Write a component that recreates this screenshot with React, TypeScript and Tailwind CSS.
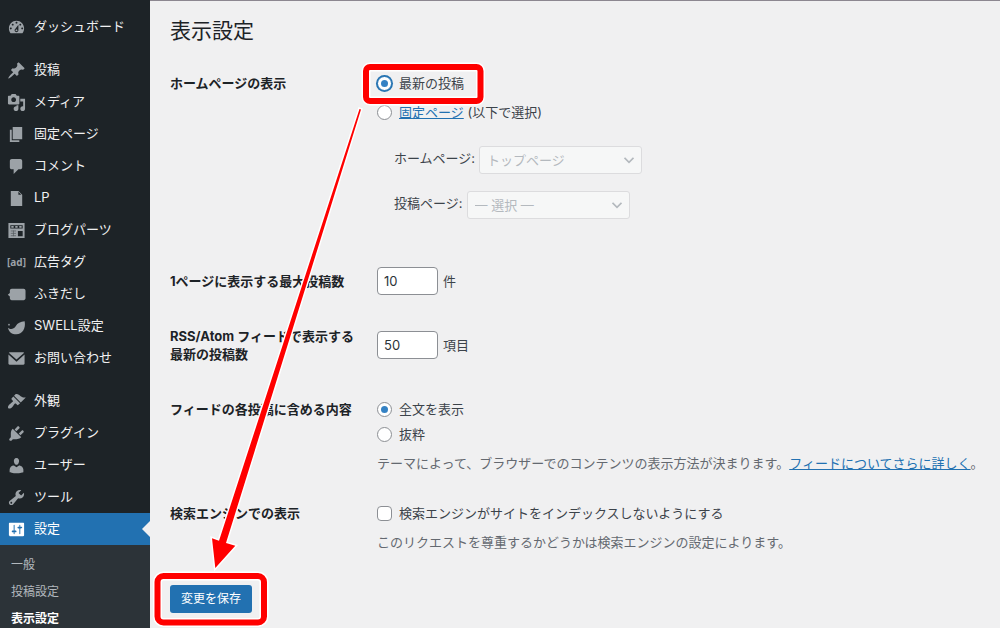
import React from 'react';

interface IconProps {
  d?: string,
  viewBox?: string,
  children?: React.ReactNode,
}

const Icon = ({ d, viewBox = '0 0 20 20', children }: IconProps) => (
  <svg className="size-[19px]" viewBox={viewBox} fill="currentColor" fillRule="evenodd" aria-hidden="true">
    {d ? <path d={d}/> : children}
  </svg>
);

const icons = {
  dashboard: 'M3.76 16h12.48c1.1-1.37 1.76-3.11 1.76-5 0-4.42-3.58-8-8-8s-8 3.58-8 8c0 1.89.66 3.63 1.76 5zM10 4c.55 0 1 .45 1 1s-.45 1-1 1-1-.45-1-1 .45-1 1-1zM6 6c.55 0 1 .45 1 1s-.45 1-1 1-1-.45-1-1 .45-1 1-1zm8 0c.55 0 1 .45 1 1s-.45 1-1 1-1-.45-1-1 .45-1 1-1zm-5.37 5.55L12 7v6c0 1.1-.9 2-2 2s-2-.9-2-2c0-.57.24-1.08.63-1.45zM4 10c.55 0 1 .45 1 1s-.45 1-1 1-1-.45-1-1 .45-1 1-1zm12 0c.55 0 1 .45 1 1s-.45 1-1 1-1-.45-1-1 .45-1 1-1zm-5 3c0-.55-.45-1-1-1s-1 .45-1 1 .45 1 1 1 1-.45 1-1z',
  post: 'M10.44 3.02l1.82-1.82 6.36 6.35-1.83 1.82c-1.05-.68-2.48-.57-3.41.36l-.75.75c-.92.93-1.04 2.35-.35 3.41l-1.83 1.82-2.41-2.41-2.8 2.79c-.42.42-3.38 2.71-3.8 2.29s1.86-3.39 2.28-3.81l2.79-2.79L4.1 9.36l1.83-1.82c1.05.69 2.48.57 3.4-.36l.75-.75c.93-.92 1.05-2.35.36-3.41z',
  media: 'M13 11V4c0-.55-.45-1-1-1h-1.67L9 1H5L3.67 3H2c-.55 0-1 .45-1 1v7c0 .55.45 1 1 1h10c.55 0 1-.45 1-1zM7 4.5c1.38 0 2.5 1.12 2.5 2.5S8.38 9.5 7 9.5 4.5 8.38 4.5 7 5.62 4.5 7 4.5zM14 6h5v10.5c0 1.38-1.12 2.5-2.5 2.5S14 17.88 14 16.5s1.12-2.5 2.5-2.5c.17 0 .34.02.5.05V9h-3V6zm-4 8.05V13h2v3.5c0 1.38-1.12 2.5-2.5 2.5S7 17.88 7 16.5 8.12 14 9.5 14c.17 0 .34.02.5.05z',
  page: 'M6 15V2h10v13H6zm-1 1h8v2H3V5h2v11z',
  comment: 'M5 2h9c1.1 0 2 .9 2 2v7c0 1.1-.9 2-2 2h-2l-5 5v-5H5c-1.1 0-2-.9-2-2V4c0-1.1.9-2 2-2z',
  file: 'M12 2l4 4v12H4V2h8zm0 4h3l-3-3v3z',
  parts: 'M1.500 2h17v16h-17zM3.500 4.500v3.500h13v-3.500zM11.500 10.500v5.500h5v-5.500z',
  balloon: 'M5 4h12.500c1.100 0 2 .9 2 2v8c0 1.100-.9 2-2 2H5c-1.100 0-2-.9-2-2v-2L.8 10.200 3 8.500V6c0-1.100.9-2 2-2z',
  mail: 'M3 3.500h14c.5 0 .9.200 1.100.5L10 11 1.900 4c.2-.3.600-.5 1.100-.5zM1.500 5.800l8.500 7.500 8.500-7.500v9.500c0 .7-.5 1.200-1.200 1.200H2.700c-.7 0-1.200-.5-1.200-1.200z',
  appearance: 'M14.48 11.06L7.41 3.99l1.5-1.5c.5-.56 2.3-.47 3.51.32 1.21.8 1.43 1.28 2.91 2.1 1.18.64 2.45 1.26 4.45.85zm-.71.71L6.7 4.7 4.93 6.47c-.39.39-.39 1.02 0 1.41l1.06 1.06c.39.39.39 1.03 0 1.42-.6.6-1.43 1.11-2.21 1.69-.35.26-.7.53-1.01.84C1.43 14.23.4 16.08 1.4 17.07c.99 1 2.84-.03 4.18-1.36.31-.31.58-.66.85-1.02.57-.78 1.08-1.61 1.69-2.21.39-.39 1.02-.39 1.41 0l1.06 1.06c.39.39 1.02.39 1.41 0z',
  plugin: 'M13.11 4.36L9.87 7.6 8 5.73l3.24-3.24c.35-.34 1.05-.2 1.56.32.52.51.66 1.21.31 1.55zm-8 1.77l.91-1.12 9.01 9.01-1.19.84c-.71.71-2.63 1.16-3.82 1.16H6.14L4.9 17.26c-.59.59-1.54.59-2.12 0-.59-.58-.59-1.53 0-2.12l1.24-1.24v-3.88c0-1.13.4-3.19 1.09-3.89zm7.26 3.97l3.24-3.24c.34-.35 1.04-.21 1.55.31.52.51.66 1.21.31 1.55l-3.24 3.25z',
  user: 'M10 9.25c-2.27 0-2.73-3.44-2.73-3.44C7 4.02 7.82 2 9.97 2c2.16 0 2.98 2.02 2.71 3.81 0 0-.41 3.44-2.68 3.44zm0 2.57L12.72 10c2.39 0 4.52 2.33 4.52 4.53v2.49s-3.65 1.13-7.24 1.13c-3.65 0-7.24-1.13-7.24-1.13v-2.49c0-2.25 1.94-4.48 4.47-4.48z',
  tool: 'M16.68 9.77c-1.34 1.34-3.3 1.67-4.95.99l-5.41 6.52c-.99.99-2.59.99-3.58 0s-.99-2.59 0-3.57l6.52-5.42c-.68-1.65-.35-3.61.99-4.95 1.28-1.28 3.12-1.62 4.72-1.06l-2.89 2.89 2.82 2.82 2.86-2.87c.53 1.58.18 3.39-1.08 4.65zM3.81 16.21c.4.39 1.04.39 1.43 0 .4-.4.4-1.04 0-1.43-.39-.4-1.03-.4-1.43 0-.39.39-.39 1.03 0 1.43z',
  settings: 'M18 16V4c0-.55-.45-1-1-1H3c-.55 0-1 .45-1 1v12c0 .55.45 1 1 1h14c.55 0 1-.45 1-1zM8 11h1c.55 0 1 .45 1 1s-.45 1-1 1H8v1.5c0 .28-.22.5-.5.5s-.5-.22-.5-.5V13H6c-.55 0-1-.45-1-1s.45-1 1-1h1V5.5c0-.28.22-.5.5-.5s.5.22.5.5V11zm5-2h-1c-.55 0-1-.45-1-1s.45-1 1-1h1V5.5c0-.28.22-.5.5-.5s.5.22.5.5V7h1c.55 0 1 .45 1 1s-.45 1-1 1h-1v5.5c0 .28-.22.5-.5.5s-.5-.22-.5-.5V9z',
};

const menuGroups: { label: string, icon: React.ReactNode }[][] = [
  [
    { label: 'ダッシュボード', icon: <Icon d={icons.dashboard}/> },
  ],
  [
    { label: '投稿', icon: <Icon d={icons.post}/> },
    { label: 'メディア', icon: <Icon d={icons.media}/> },
    { label: '固定ページ', icon: <Icon d={icons.page}/> },
    { label: 'コメント', icon: <Icon d={icons.comment}/> },
    { label: 'LP', icon: <Icon d={icons.file}/> },
    {
      label: 'ブログパーツ',
      icon: (
        <Icon>
          <path d={icons.parts}/>
          <path d="M4.500 5.200h2.500v2H4.500zM8.700 5.200h2.500v2H8.700zM12.900 5.200h2.500v2h-2.500z"/>
          <path d="M4 10.500h5.500M4 13h5.500M4 15.500h5.500M6.800 10v6" stroke="#1d2327" strokeWidth=".7" opacity=".6"/>
        </Icon>
      ),
    },
    { label: '広告タグ', icon: <span className="font-['Noto_Sans'] text-[10px] font-bold">[ad]</span> },
    { label: 'ふきだし', icon: <Icon d={icons.balloon}/> },
    {
      label: 'SWELL設定',
      icon: (
        <Icon viewBox="0 0 57 57">
          <circle cx="6" cy="23" r="2.500"/>
          <path d="M53 13C57 35 46 52 28 52 15 52 5 45 3 32c7 7 17 5 23-4 6-10 14-14 27-15z"/>
        </Icon>
      ),
    },
    { label: 'お問い合わせ', icon: <Icon d={icons.mail}/> },
  ],
  [
    { label: '外観', icon: <Icon d={icons.appearance}/> },
    { label: 'プラグイン', icon: <Icon d={icons.plugin}/> },
    { label: 'ユーザー', icon: <Icon d={icons.user}/> },
    { label: 'ツール', icon: <Icon d={icons.tool}/> },
    { label: '設定', icon: <Icon d={icons.settings}/> },
  ],
];

const Sidebar = () => (
  <nav className="w-[150px] shrink-0 bg-[#1d2327] text-[13px] text-[#f0f0f1]">
    <div className="flex flex-col gap-[11px] pt-[11px]">
      {menuGroups.map((group, i) => (
        <ul key={i}>
          {group.map(({ label, icon }) => {
            const current = label === '設定';
            return (
              <li key={label}>
                <a
                  href="#"
                  className={`relative flex h-8 items-center gap-2 pl-[7px] ${current ? 'bg-[#2271b1] text-white' : ''}`}
                >
                  <span className={`flex w-[19px] justify-center ${current ? 'text-white' : 'text-[#9ca2a7]'}`}>
                    {icon}
                  </span>
                  {label}
                  {current && (
                    <span className="absolute right-0 top-2 border-y-8 border-r-8 border-y-transparent border-r-[#f0f0f1]"/>
                  )}
                </a>
              </li>
            );
          })}
        </ul>
      ))}
    </div>
    <ul className="flex flex-col gap-[9px] bg-[#2c3338] pl-[11px] pt-[11px] text-xs leading-[18px] text-[#b2b8bd]">
      <li><a href="#" className="block">一般</a></li>
      <li><a href="#" className="block">投稿設定</a></li>
      <li><a href="#" className="block font-bold text-white">表示設定</a></li>
    </ul>
  </nav>
);

interface RowProps {
  title: React.ReactNode,
  htmlFor?: string,
  className?: string,
  children: React.ReactNode,
}

const Row = ({ title, htmlFor, className = '', children }: RowProps) => (
  <div role="group" className={`flex ${className}`}>
    <div className="w-[207px] shrink-0 font-bold text-[#1d2327]">
      {htmlFor ? <label htmlFor={htmlFor}>{title}</label> : title}
    </div>
    <div className="min-w-0 flex-1">{children}</div>
  </div>
);

interface RadioProps {
  id: string,
  name: string,
  checked?: boolean,
  focused?: boolean,
  children: React.ReactNode,
}

const Radio = ({ id, name, checked, focused, children }: RadioProps) => (
  <div className="flex items-center gap-[7px]">
    <input
      id={id}
      name={name}
      type="radio"
      defaultChecked={checked}
      className={`grid size-[15px] appearance-none place-items-center rounded-full border bg-white before:size-[7px] before:rounded-full checked:before:bg-[#3582c4] ${focused ? 'border-[#2271b1] ring-1 ring-[#2271b1]' : 'border-[#8c8f94]'}`}
    />
    <label htmlFor={id}>{children}</label>
  </div>
);

const PageSelect = ({ id, label, value }: { id: string, label: string, value: string }) => (
  <div className="flex items-start gap-1">
    <label htmlFor={id} className="leading-6">{label}</label>
    <div className="relative">
      <select
        id={id}
        disabled
        className="block h-7 w-[163px] appearance-none rounded-[3px] border border-[#dcdcde] bg-[#f6f7f7] px-[7px] text-[#b4b9be] disabled:opacity-100"
      >
        <option>{value}</option>
      </select>
      <svg
        className="pointer-events-none absolute right-2 top-[9px] h-[10px] w-[10px]"
        viewBox="0 0 10 10"
        fill="none"
        stroke="#b4b9be"
        strokeWidth="1.700"
        aria-hidden="true"
      >
        <path d="M.5 2.800 5 7.300l4.500-4.500"/>
      </svg>
    </div>
  </div>
);

const numberClass = 'h-7 w-[61px] rounded-[4px] border border-[#8c8f94] bg-white px-[6px] text-[#2c3338]';

// Two frames joined by an arrow, laid over the whole screen
const Annotations = () => (
  <svg className="pointer-events-none absolute inset-0 h-full w-full" aria-hidden="true">
    <g fill="none" stroke="#fff" strokeWidth="9">
      <rect x="366" y="67" width="114.500" height="34" rx="4"/>
      <rect x="157.500" y="576" width="106.500" height="46.500" rx="6"/>
    </g>
    <path
      d="M359.500 109l1.500.5L226 543l9.300 2.700L215.300 568 212 538.300l7 2.500z"
      fill="#f00"
      stroke="#fff"
      strokeWidth="3"
      paintOrder="stroke"
    />
    <g fill="none" stroke="#f00" strokeWidth="6">
      <rect x="366" y="67" width="114.500" height="34" rx="4"/>
      <rect x="157.500" y="576" width="106.500" height="46.500" rx="6"/>
    </g>
  </svg>
);

const App = () => {
  return (
    <div className="relative flex min-h-screen bg-[#f0f0f1] font-[Inter,'Noto_Sans_CJK_JP',sans-serif]">
      <Sidebar/>
      <main className="min-w-0 flex-1 border-t border-[#8c8790] pl-5 pt-[14px] text-[13px] leading-[18px] text-[#3c434a]">
        <h1 className="text-[21px] leading-8 text-[#1d2327]">表示設定</h1>
        <form onSubmit={(e) => e.preventDefault()}>
          <Row title="ホームページの表示" className="mt-[27px]">
            <div className="flex flex-col gap-[11px]">
              <Radio id="front-posts" name="front" checked focused>最新の投稿</Radio>
              <Radio id="front-page" name="front">
                <a href="#" className="text-[#2271b1] underline">固定ページ</a> (以下で選択)
              </Radio>
            </div>
            <div className="mt-[25px] flex flex-col gap-[17px] pl-[17px]">
              <PageSelect id="page-on-front" label="ホームページ:" value="トップページ"/>
              <PageSelect id="page-for-posts" label="投稿ページ:" value="— 選択 —"/>
            </div>
          </Row>
          <Row title="1ページに表示する最大投稿数" htmlFor="posts-per-page" className="mt-12 items-center">
            <div className="flex items-center gap-[5px]">
              <input id="posts-per-page" type="text" inputMode="numeric" defaultValue="10" className={numberClass}/>
              件
            </div>
          </Row>
          <Row
            title={<>RSS/Atom フィードで表示する<br/>最新の投稿数</>}
            htmlFor="posts-per-rss"
            className="mt-8 items-center"
          >
            <div className="flex items-center gap-[5px]">
              <input id="posts-per-rss" type="text" inputMode="numeric" defaultValue="50" className={numberClass}/>
              項目
            </div>
          </Row>
          <Row title="フィードの各投稿に含める内容" className="mt-[37px]">
            <div className="flex flex-col gap-[7px]">
              <Radio id="rss-full" name="rss" checked>全文を表示</Radio>
              <Radio id="rss-summary" name="rss">抜粋</Radio>
            </div>
            <p className="mt-[11px] text-[#646970]">
              テーマによって、ブラウザーでのコンテンツの表示方法が決まります。<a href="#" className="text-[#2271b1] underline">フィードについてさらに詳しく</a>。
            </p>
          </Row>
          <Row title="検索エンジンでの表示" className="mt-8">
            <div className="flex items-center gap-[7px]">
              <input
                id="blog-public"
                type="checkbox"
                className="size-[15px] appearance-none rounded-[4px] border border-[#8c8f94] bg-white checked:bg-[#3582c4]"
              />
              <label htmlFor="blog-public">検索エンジンがサイトをインデックスしないようにする</label>
            </div>
            <p className="mt-[11px] text-[#646970]">
              このリクエストを尊重するかどうかは検索エンジンの設定によります。
            </p>
          </Row>
          <button type="submit" className="mt-[34px] h-7 rounded-[3px] bg-[#2271b1] px-[11px] text-xs text-white">
            変更を保存
          </button>
        </form>
      </main>
      <Annotations/>
    </div>
  );
};

export default App;
